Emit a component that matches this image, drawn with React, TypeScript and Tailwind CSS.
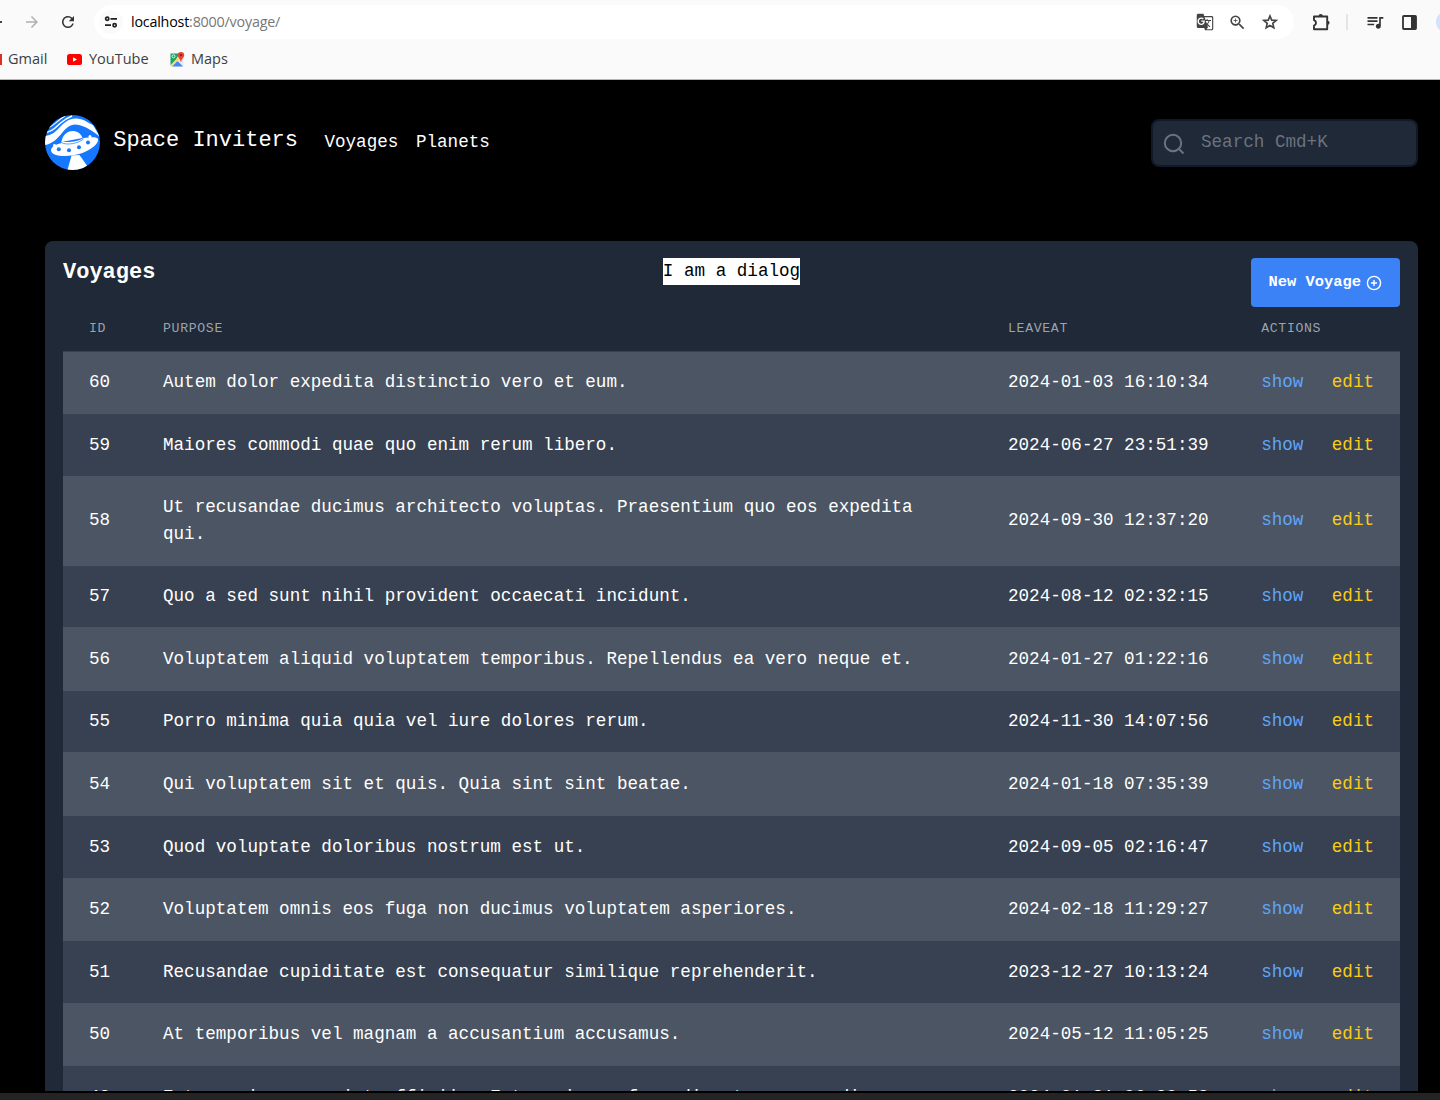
import React from "react";
import { MdArrowForward, MdRefresh, MdGTranslate, MdZoomIn, MdQueueMusic } from "react-icons/md";

type Voyage = { id: number; purpose: string; leaveAt: string; height: string };

const voyages: Voyage[] = [
  { id: 60, purpose: "Autem dolor expedita distinctio vero et eum.", leaveAt: "2024-01-03 16:10:34", height: "h-[62px] pb-px" },
  { id: 59, purpose: "Maiores commodi quae quo enim rerum libero.", leaveAt: "2024-06-27 23:51:39", height: "h-[62px]" },
  { id: 58, purpose: "Ut recusandae ducimus architecto voluptas. Praesentium quo eos expedita qui.", leaveAt: "2024-09-30 12:37:20", height: "h-[90px] pb-px" },
  { id: 57, purpose: "Quo a sed sunt nihil provident occaecati incidunt.", leaveAt: "2024-08-12 02:32:15", height: "h-[61px]" },
  { id: 56, purpose: "Voluptatem aliquid voluptatem temporibus. Repellendus ea vero neque et.", leaveAt: "2024-01-27 01:22:16", height: "h-[64px]" },
  { id: 55, purpose: "Porro minima quia quia vel iure dolores rerum.", leaveAt: "2024-11-30 14:07:56", height: "h-[61px]" },
  { id: 54, purpose: "Qui voluptatem sit et quis. Quia sint sint beatae.", leaveAt: "2024-01-18 07:35:39", height: "h-[64px]" },
  { id: 53, purpose: "Quod voluptate doloribus nostrum est ut.", leaveAt: "2024-09-05 02:16:47", height: "h-[62px]" },
  { id: 52, purpose: "Voluptatem omnis eos fuga non ducimus voluptatem asperiores.", leaveAt: "2024-02-18 11:29:27", height: "h-[63px]" },
  { id: 51, purpose: "Recusandae cupiditate est consequatur similique reprehenderit.", leaveAt: "2023-12-27 10:13:24", height: "h-[62px]" },
  { id: 50, purpose: "At temporibus vel magnam a accusantium accusamus.", leaveAt: "2024-05-12 11:05:25", height: "h-[63px]" },
  { id: 49, purpose: "Est magni ea eveniet officiis. Est omnis ea fuga dicunt ea commodi.", leaveAt: "2024-01-31 06:20:53", height: "h-[63px]" },
];

const columns = "grid grid-cols-[73.6px_845px_253.2px_1fr]";

function BrowserChrome() {
  return (
    <div className="h-20 shrink-0 overflow-hidden border-b border-[#b5b5b5] bg-[#fafafa] font-['Open_Sans',sans-serif] text-[#3c4043]">
      <div className="flex h-11 items-center *:shrink-0">
        <span className="h-[2px] w-[2px] bg-[#444]" />
        <MdArrowForward className="ml-[21px] size-[18px] text-[#b0b0b0]" />
        <MdRefresh className="ml-[18px] size-[18px] text-[#333]" />
        <div className="ml-[17px] flex h-[34px] w-[1200px] items-center rounded-full bg-white pl-[5px]">
          <div className="flex size-6 items-center justify-center rounded-full bg-[#fafafa]">
            <svg className="size-[14px]" viewBox="0 0 14 14" fill="none" stroke="#202124" strokeWidth="1.7">
              <circle cx="3.2" cy="3.8" r="1.6" />
              <path d="M6.5 3.8H13M1 10.2h6" />
              <circle cx="10.6" cy="10.2" r="1.6" />
            </svg>
          </div>
          <span className="ml-2 text-[14.3px] leading-5 tracking-[-0.2px] text-[#777]">
            <span className="text-black">localhost</span>:8000/voyage/
          </span>
          <div className="mr-[15px] ml-auto flex items-center gap-[14px] text-[#444]">
            <MdGTranslate className="size-[18px]" />
            <MdZoomIn className="size-[19px]" />
            <svg className="size-[18px]" viewBox="0 0 24 24" fill="none" stroke="currentColor" strokeWidth="2.200">
              <path d="M12 4 14.300 9.500 20.300 10 15.700 13.900 17.100 19.700 12 16.600 6.900 19.700 8.300 13.900 3.700 10 9.700 9.500z" />
            </svg>
          </div>
        </div>
        <svg className="ml-[18px] size-[18px]" viewBox="0 0 18 18">
          <path d="M2 3.500h13.200v12.700H2v-3.600q2-.7 2-2.700T2 7.200z" fill="none" stroke="#333" strokeWidth="1.900" strokeLinejoin="round" />
          <path d="M6.600 3a2.100 2.100 0 0 1 4.200 0zM15.500 7.700a2.100 2.100 0 0 1 0 4.200z" fill="#333" />
        </svg>
        <span className="ml-[16px] h-4 w-[2px] bg-[#e3e5e8]" />
        <MdQueueMusic className="ml-[17px] size-5 text-[#333]" />
        <svg className="ml-[17px] size-[15px] shrink-0" viewBox="0 0 15 15">
          <rect x="1" y="1" width="13" height="13" rx="0.8" fill="none" stroke="#333" strokeWidth="1.8" />
          <path d="M9 1h5v13H9z" fill="#333" />
        </svg>
        <span className="ml-[19px] size-[22px] shrink-0 rounded-full bg-[#d3e3fd]" />
      </div>
      <div className="flex h-[30px] items-center text-[14.5px]">
        <span className="h-[11px] w-[2px] bg-[#d93025]" />
        <span className="ml-[6px] w-[59px]">Gmail</span>
        <svg className="h-[11px] w-[15px]" viewBox="0 0 15 11">
          <rect width="15" height="11" rx="2.6" fill="#f00" />
          <path d="M6 3.2 10 5.5 6 7.8z" fill="#fff" />
        </svg>
        <span className="ml-[7px] w-[81px]">YouTube</span>
        <svg className="size-[15px]" viewBox="0 0 15 15">
          <path d="M0.500 1.500h13v13h-13z" fill="#e8eaed" />
          <path d="M0.500 1.500h9L6 7.500l-5.500 6z" fill="#1fa463" />
          <path d="M2 14.500 7.500 9l5.500 5.500z" fill="#4285f4" />
          <path d="M0.500 13 9 4.500l1.500 1.500L2 14.500z" fill="#fdd663" />
          <circle cx="3.500" cy="4.300" r="1.500" fill="none" stroke="#fff" strokeWidth="0.800" />
          <path d="M11 0a3.200 3.200 0 0 1 3.200 3.200C14.200 5.500 11.600 6.500 11.200 10h-.5C10.300 6.500 7.800 5.500 7.800 3.200A3.200 3.200 0 0 1 11 0z" fill="#ea4335" />
          <circle cx="11" cy="3.200" r="1.100" fill="#8c1a11" />
        </svg>
        <span className="ml-[6px]">Maps</span>
      </div>
    </div>
  );
}

function Logo() {
  return (
    <svg className="size-[55px]" viewBox="0 0 55 55">
      <defs>
        <clipPath id="disc">
          <circle cx="27.5" cy="27.500" r="27.500" />
        </clipPath>
      </defs>
      <g clipPath="url(#disc)">
        <path d="M0 0h55v55H0z" fill="#1677ff" />
        <path d="M0 21C8 20 11 16 15 12S23 4 30 3.500C38 3 43 8 48 10l7 12C47 15 41 12 34 10 26 8 22 12 17 18 12 24 7 29 0 30z" fill="#fff" />
        <path d="M0 17.500C8 17 11 12 15 8.500S22 3 27 1" fill="none" stroke="#fff" strokeWidth="1.500" />
        <path d="M3 12.500C9 11 13 5 20 1" fill="none" stroke="#fff" strokeWidth="1.200" />
        <path d="M26.500 40.500 34.500 40 45 55H22.500z" fill="#fff" />
        <path d="M16.500 27c1-7 5.500-11 11-11 4.500 0 8.500 2.500 10 7z" fill="#fff" />
        <path d="M16.500 26C20 28 33 27 38.500 23 46 22 52 21.500 53 24c1.300 4.500-7 10.500-15.500 14C26 42 9.500 42.500 6.500 37c-2-4 3-7.500 10-9z" fill="#fff" />
        <path d="M16.500 27.500c4.500 3.200 17 1 22-3.500" fill="none" stroke="#1677ff" strokeWidth="0.700" />
        <path d="m9.500 30.500 1.500 2.500M45 22l1 2" stroke="#fff" strokeWidth="1.200" />
        <circle cx="9.500" cy="30.500" r="1.400" fill="#fff" />
        <circle cx="45" cy="21.500" r="1.500" fill="#fff" />
        <circle cx="13.800" cy="34.300" r="2" fill="#1677ff" />
        <circle cx="24" cy="35.300" r="2" fill="#1677ff" />
        <circle cx="34" cy="32.300" r="2" fill="#1677ff" />
        <circle cx="43" cy="27.500" r="2" fill="#1677ff" />
      </g>
    </svg>
  );
}

function Header() {
  return (
    <header className="flex h-[55px] items-center">
      <Logo />
      <span className="mb-[3px] ml-[13.2px] text-[22px] leading-[30px]">Space Inviters</span>
      <nav className="ml-[26.4px] flex gap-[17.6px]">
        <a>Voyages</a>
        <a>Planets</a>
      </nav>
      <div className="ml-auto flex h-12 w-[267px] items-center rounded-lg border-2 border-[#111827] bg-[#1f2937] pl-[10px] text-[#6b7280]">
        <svg className="mt-[2px] size-[22px]" viewBox="0 0 22 22" fill="none" stroke="currentColor" strokeWidth="2">
          <circle cx="10" cy="10" r="8.200" />
          <path d="m15.500 15.500 5 5" />
        </svg>
        <span className="ml-[16px]">Search Cmd+K</span>
      </div>
    </header>
  );
}

function VoyageRow({ voyage, striped }: { voyage: Voyage; striped: boolean }) {
  return (
    <div className={`${columns} ${voyage.height} shrink-0 items-center ${striped ? "bg-[#4b5563]" : "bg-[#374151]"}`}>
      <span className="pl-[26px]">{voyage.id}</span>
      <span className="pr-[60px] pl-[26.4px]">{voyage.purpose}</span>
      <span className="pl-[26.4px]">{voyage.leaveAt}</span>
      <span className="flex gap-[28.4px] pl-[26.4px]">
        <a className="text-[#60a5fa]">show</a>
        <a className="text-[#facc15]">edit</a>
      </span>
    </div>
  );
}

export default function App() {
  return (
    <div className="flex h-[1100px] w-[1440px] flex-col overflow-hidden bg-black">
      <BrowserChrome />
      <main className="h-[1013px] shrink-0 overflow-hidden pt-[35px] pr-[22px] pl-[45px] font-['Liberation_Mono',monospace] text-[17.6px] leading-[27px] text-white">
        <Header />
        <section className="mt-[71px] h-[850px] overflow-hidden rounded-t-lg bg-[#1f2937] px-[18px] pt-[17px]">
          <div className="flex h-[49px] items-start justify-between">
            <h1 className="w-[149px] pt-px text-[22px] font-bold">Voyages</h1>
            <div className="bg-white text-black">I am a dialog</div>
            <button className="flex h-[49px] w-[149px] items-center rounded-[4px] bg-[#3b82f6] pl-[17.6px] text-[15.4px] font-bold">
              <span>New Voyage</span>
              <svg className="ml-[5px] size-4" viewBox="0 0 16 16" fill="none" stroke="currentColor" strokeWidth="1.400">
                <circle cx="8" cy="8" r="6.600" />
                <path d="M8 5v6M5 8h6" />
              </svg>
            </button>
          </div>
          <div className={`${columns} h-[45px] border-b border-[#374151] pt-[8px] text-[13.2px] tracking-[0.66px] text-[#9ca3af]`}>
            <span className="pl-[26px]">ID</span>
            <span className="pl-[26.4px]">PURPOSE</span>
            <span className="pl-[26.4px]">LEAVEAT</span>
            <span className="pl-[26.4px]">ACTIONS</span>
          </div>
          {voyages.map((voyage, index) => (
            <VoyageRow key={voyage.id} voyage={voyage} striped={index % 2 === 0} />
          ))}
        </section>
      </main>
      <footer className="h-[7px] shrink-0 bg-[#242424]" />
    </div>
  );
}
